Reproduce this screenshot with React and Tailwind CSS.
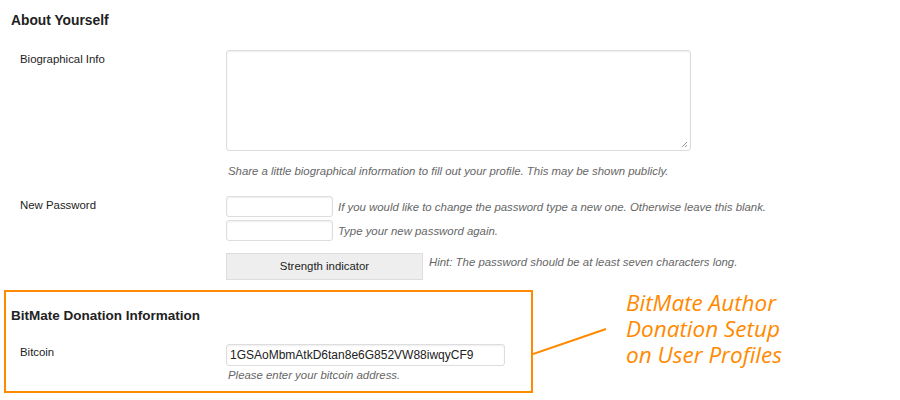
import React from 'react';

const orange = '#ff8a00';

const Label = ({ children, className = '' }) => (
  <div className={`w-[226px] shrink-0 pl-[20px] text-[11.4px] leading-[16px] text-[#222] ${className}`}>{children}</div>
);

const Help = ({ children, className = '' }) => (
  <p className={`text-[11.4px] leading-[16px] italic text-[#666] ${className}`}>{children}</p>
);

const TextInput = ({ className = '', value }) => (
  <input
    type="text"
    readOnly
    defaultValue={value}
    className={`h-[21px] border border-[#ddd] rounded-[3px] bg-white px-[3px] text-[11.4px] text-[#333] shadow-[inset_0_1px_2px_rgba(0,0,0,0.07)] outline-none ${className}`}
  />
);

export default function App() {
  return (
    <div
      className="w-[900px] h-[400px] bg-white overflow-hidden text-[#222]"
      style={{ fontFamily: '"Liberation Sans", Arial, sans-serif' }}
    >
      <h3 className="pl-[11px] pt-[12px] text-[13.8px] leading-[17px] font-bold">About Yourself</h3>

      {/* Biographical info */}
      <div className="flex mt-[21px]">
        <Label className="pt-[1px]">Biographical Info</Label>
        <div>
          <div className="relative w-[465px] h-[101px] border border-[#ddd] rounded-[3px] shadow-[inset_0_1px_2px_rgba(0,0,0,0.07)]">
            <svg className="absolute right-[2px] bottom-[2px]" width="7" height="7" viewBox="0 0 7 7">
              <path d="M6 1 L1 6 M6 4 L4 6" stroke="#999" strokeWidth="1" />
            </svg>
          </div>
          <Help className="mt-[12px] pl-[2px]">
            Share a little biographical information to fill out your profile. This may be shown publicly.
          </Help>
        </div>
      </div>

      {/* Password */}
      <div className="flex mt-[17px]">
        <Label className="pt-[1px]">New Password</Label>
        <div>
          <div className="flex items-center gap-[5px]">
            <TextInput className="w-[107px]" />
            <Help>If you would like to change the password type a new one. Otherwise leave this blank.</Help>
          </div>
          <div className="flex items-center gap-[5px] mt-[3px]">
            <TextInput className="w-[107px]" />
            <Help>Type your new password again.</Help>
          </div>
          <div className="flex items-start gap-[6px] mt-[12px]">
            <div className="w-[197px] h-[27px] flex items-center justify-center bg-[#eee] border border-[#ddd] text-[11.4px] text-[#222]">
              Strength indicator
            </div>
            <Help className="pt-[1px]">Hint: The password should be at least seven characters long.</Help>
          </div>
        </div>
      </div>

      {/* BitMate box + callout */}
      <div className="flex items-start ml-[4px] mt-[10px]">
        <div className="w-[529px] h-[103px] border-2 pt-[15px]" style={{ borderColor: orange }}>
          <h3 className="pl-[5px] text-[13.5px] leading-[17px] font-bold">BitMate Donation Information</h3>
          <div className="flex mt-[18px] -ml-[6px]">
            <Label className="pt-[2px]">Bitcoin</Label>
            <div>
              <TextInput className="w-[279px] h-[22px] !text-[12px] !text-[#222]" value="1GSAoMbmAtkD6tan8e6G852VW88iwqyCF9" />
              <Help className="mt-[1px] pl-[2px]">Please enter your bitcoin address.</Help>
            </div>
          </div>
        </div>
        <svg width="93" height="80" viewBox="0 0 93 80" className="shrink-0">
          <line x1="0" y1="64" x2="73" y2="39" stroke={orange} strokeWidth="2" />
        </svg>
        <div
          className="text-[22.5px] leading-[26px] italic"
          style={{ color: orange, fontFamily: '"Open Sans", sans-serif' }}
        >
          <div>BitMate Author</div>
          <div>Donation Setup</div>
          <div>on User Profiles</div>
        </div>
      </div>
    </div>
  );
}
